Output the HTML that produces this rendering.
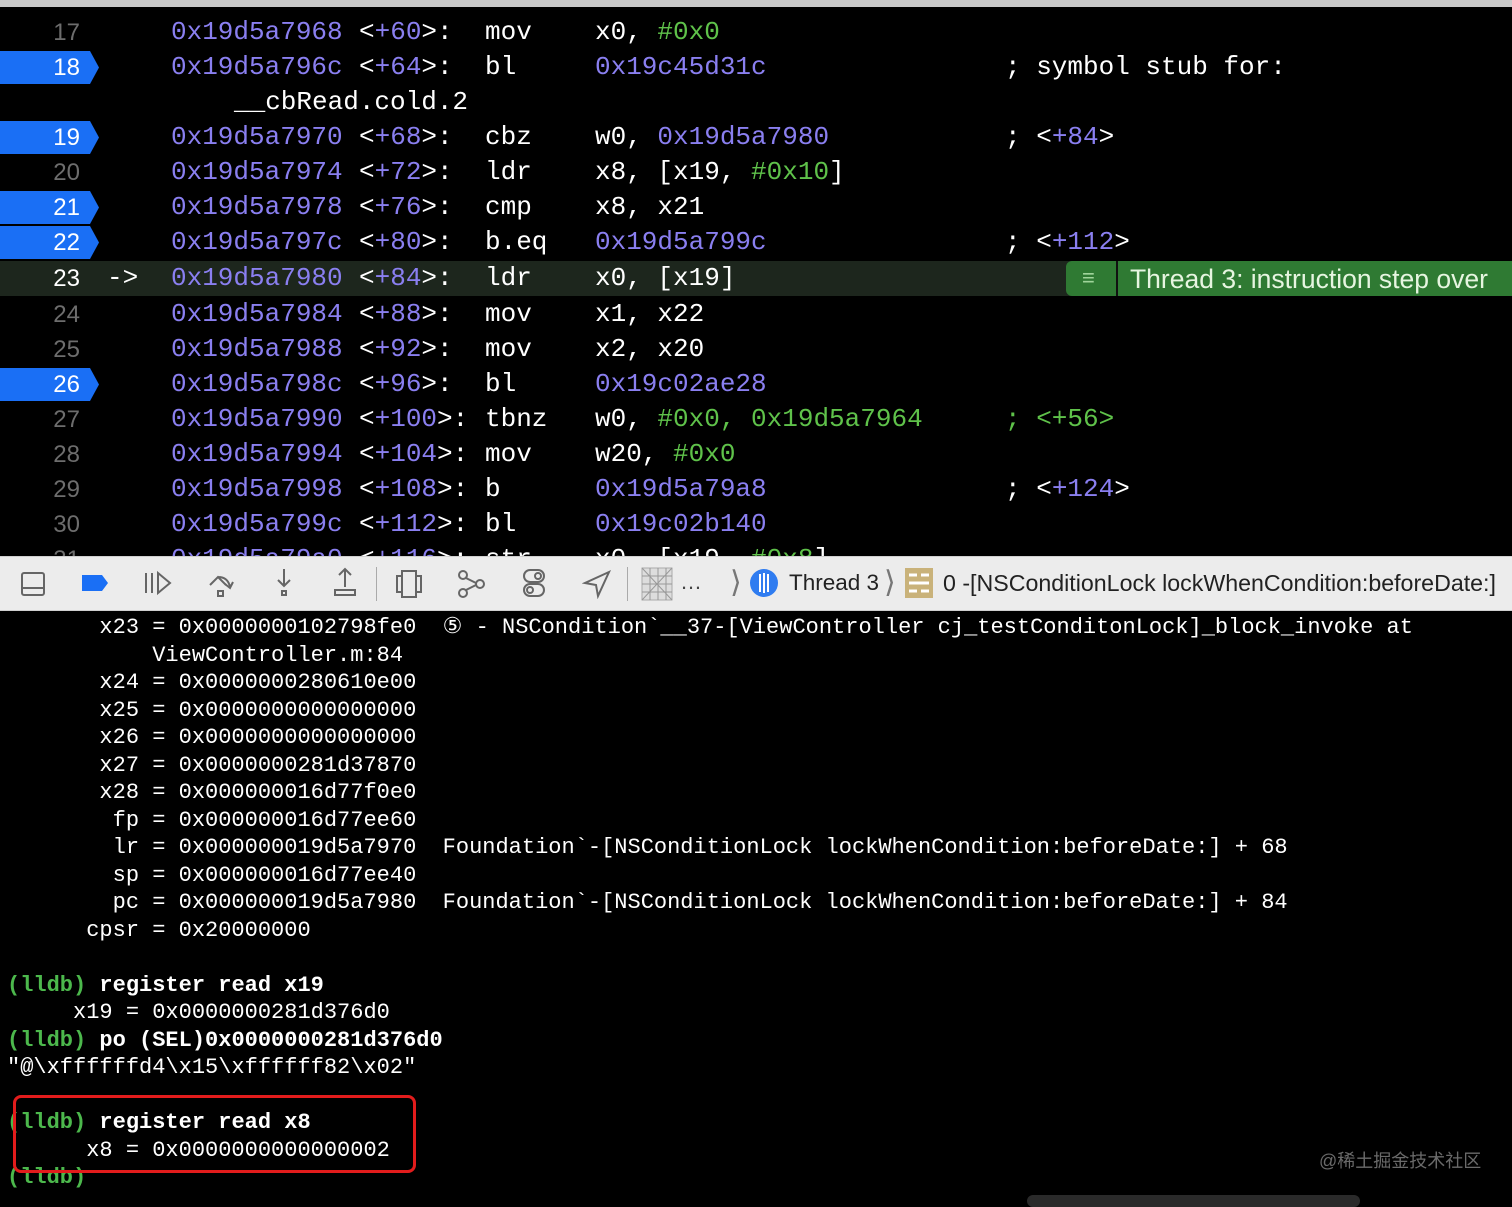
<!DOCTYPE html>
<html><head><meta charset="utf-8"><style>
*{margin:0;padding:0;box-sizing:border-box}
body{width:1512px;height:1201px;background:#000;overflow:hidden;position:relative;font-family:"Liberation Mono",monospace}
.a{position:absolute;white-space:pre}
.r{position:absolute;left:0;width:1512px;height:35px;font-size:26px;line-height:35px;color:#fff}
.r span{position:absolute;top:0;white-space:pre}
.p{color:#8a7ff0}.g{color:#5fc24a}.w{color:#fff}
.ln{left:0;width:80px;text-align:right;color:#6d6d6d;font-family:"Liberation Sans",sans-serif;font-size:24px}
.bp{position:absolute;left:0;top:1px;width:99px;height:33px;background:#1a6ff5;clip-path:polygon(0 0,90px 0,99px 50%,90px 100%,0 100%)}
.bn{color:#fff}
.c{position:absolute;left:7px;font-size:22px;line-height:27.5px;color:#fff;white-space:pre;font-family:"Liberation Mono",monospace}
.lb{color:#4cb84c;font-weight:bold}.b{font-weight:bold}
.tb{position:absolute;top:556px;left:0;width:1512px;height:55px;background:#ececec;border-top:1px solid #cfcfcf;border-bottom:1px solid #cfcfcf;font-family:"Liberation Sans",sans-serif}
.tb svg{position:absolute}
</style></head><body>
<div class="a" style="left:0;top:0;width:1512px;height:7px;background:#c9c9c9"></div>

<div class="r" style="top:15px"><span class="ln">17</span><span class="p" style="left:171px">0x19d5a7968</span><span style="left:359px">&lt;<span class="p" style="position:static">+60</span>&gt;:</span><span style="left:485px">mov</span><span style="left:595px">x0, <span class="g" style="position:static">#0x0</span></span></div>
<div class="r" style="top:50px"><div class="bp"></div><span class="ln bn">18</span><span class="p" style="left:171px">0x19d5a796c</span><span style="left:359px">&lt;<span class="p" style="position:static">+64</span>&gt;:</span><span style="left:485px">bl</span><span class="p" style="left:595px">0x19c45d31c</span><span style="left:1005px">; symbol stub for:</span></div>
<div class="r" style="top:85px"><span style="left:234px">__cbRead.cold.2</span></div>
<div class="r" style="top:120px"><div class="bp"></div><span class="ln bn">19</span><span class="p" style="left:171px">0x19d5a7970</span><span style="left:359px">&lt;<span class="p" style="position:static">+68</span>&gt;:</span><span style="left:485px">cbz</span><span style="left:595px">w0, <span class="p" style="position:static">0x19d5a7980</span></span><span style="left:1005px">; &lt;<span class="p" style="position:static">+84</span>&gt;</span></div>
<div class="r" style="top:155px"><span class="ln">20</span><span class="p" style="left:171px">0x19d5a7974</span><span style="left:359px">&lt;<span class="p" style="position:static">+72</span>&gt;:</span><span style="left:485px">ldr</span><span style="left:595px">x8, [x19, <span class="g" style="position:static">#0x10</span>]</span></div>
<div class="r" style="top:190px"><div class="bp"></div><span class="ln bn">21</span><span class="p" style="left:171px">0x19d5a7978</span><span style="left:359px">&lt;<span class="p" style="position:static">+76</span>&gt;:</span><span style="left:485px">cmp</span><span style="left:595px">x8, x21</span></div>
<div class="r" style="top:225px"><div class="bp"></div><span class="ln bn">22</span><span class="p" style="left:171px">0x19d5a797c</span><span style="left:359px">&lt;<span class="p" style="position:static">+80</span>&gt;:</span><span style="left:485px">b.eq</span><span class="p" style="left:595px">0x19d5a799c</span><span style="left:1005px">; &lt;<span class="p" style="position:static">+112</span>&gt;</span></div>
<div class="r" style="top:261px;background:#1d261d"><span class="ln bn">23</span><span style="left:107px">-&gt;</span><span class="p" style="left:171px">0x19d5a7980</span><span style="left:359px">&lt;<span class="p" style="position:static">+84</span>&gt;:</span><span style="left:485px">ldr</span><span style="left:595px">x0, [x19]</span>
<div style="position:absolute;left:1066px;top:0;width:446px;height:35px;background:#2f7a33;border-radius:6px 0 0 6px"></div>
<div style="position:absolute;left:1116px;top:0;width:2px;height:35px;background:#111"></div>
<span style="left:1082px;top:-1px;color:#9fd49a;font-family:'Liberation Sans',sans-serif;font-size:22px">≡</span>
<span style="left:1130px;top:1px;color:#e6f5e0;font-family:'Liberation Sans',sans-serif;font-size:26.5px">Thread 3: instruction step over</span></div>
<div class="r" style="top:297px"><span class="ln">24</span><span class="p" style="left:171px">0x19d5a7984</span><span style="left:359px">&lt;<span class="p" style="position:static">+88</span>&gt;:</span><span style="left:485px">mov</span><span style="left:595px">x1, x22</span></div>
<div class="r" style="top:332px"><span class="ln">25</span><span class="p" style="left:171px">0x19d5a7988</span><span style="left:359px">&lt;<span class="p" style="position:static">+92</span>&gt;:</span><span style="left:485px">mov</span><span style="left:595px">x2, x20</span></div>
<div class="r" style="top:367px"><div class="bp"></div><span class="ln bn">26</span><span class="p" style="left:171px">0x19d5a798c</span><span style="left:359px">&lt;<span class="p" style="position:static">+96</span>&gt;:</span><span style="left:485px">bl</span><span class="p" style="left:595px">0x19c02ae28</span></div>
<div class="r" style="top:402px"><span class="ln">27</span><span class="p" style="left:171px">0x19d5a7990</span><span style="left:359px">&lt;<span class="p" style="position:static">+100</span>&gt;:</span><span style="left:485px">tbnz</span><span style="left:595px">w0, <span class="g" style="position:static">#0x0, 0x19d5a7964</span></span><span class="g" style="left:1005px">; &lt;+56&gt;</span></div>
<div class="r" style="top:437px"><span class="ln">28</span><span class="p" style="left:171px">0x19d5a7994</span><span style="left:359px">&lt;<span class="p" style="position:static">+104</span>&gt;:</span><span style="left:485px">mov</span><span style="left:595px">w20, <span class="g" style="position:static">#0x0</span></span></div>
<div class="r" style="top:472px"><span class="ln">29</span><span class="p" style="left:171px">0x19d5a7998</span><span style="left:359px">&lt;<span class="p" style="position:static">+108</span>&gt;:</span><span style="left:485px">b</span><span class="p" style="left:595px">0x19d5a79a8</span><span style="left:1005px">; &lt;<span class="p" style="position:static">+124</span>&gt;</span></div>
<div class="r" style="top:507px"><span class="ln">30</span><span class="p" style="left:171px">0x19d5a799c</span><span style="left:359px">&lt;<span class="p" style="position:static">+112</span>&gt;:</span><span style="left:485px">bl</span><span class="p" style="left:595px">0x19c02b140</span></div>
<div class="r" style="top:542px"><span class="ln">31</span><span class="p" style="left:171px">0x19d5a79a0</span><span style="left:359px">&lt;<span class="p" style="position:static">+116</span>&gt;:</span><span style="left:485px">str</span><span style="left:595px">x0, [x19, <span class="g" style="position:static">#0x8</span>]</span></div>

<div class="tb">
<svg style="left:20px;top:14px" width="26" height="26" viewBox="0 0 26 26" fill="none" stroke="#666" stroke-width="2"><rect x="2" y="2" width="22" height="22" rx="2"/><line x1="2" y1="17" x2="24" y2="17"/></svg>
<svg style="left:80px;top:16px" width="30" height="20" viewBox="0 0 30 20"><path d="M2 2h20l6 8-6 8H2z" fill="#1a6ff5"/></svg>
<svg style="left:142px;top:12px" width="32" height="28" viewBox="0 0 32 28" fill="none" stroke="#666" stroke-width="2"><line x1="4" y1="4" x2="4" y2="24"/><line x1="10" y1="4" x2="10" y2="24"/><path d="M16 4l12 10-12 10z"/></svg>
<svg style="left:206px;top:12px" width="32" height="30" viewBox="0 0 32 30" fill="none" stroke="#666" stroke-width="2"><path d="M4 16l8-8 8 8M12 8q10 0 12 10"/><path d="M19 15l5 4 3-6"/><rect x="12" y="22" width="5" height="5"/></svg>
<svg style="left:272px;top:10px" width="24" height="32" viewBox="0 0 24 32" fill="none" stroke="#666" stroke-width="2"><line x1="12" y1="2" x2="12" y2="18"/><path d="M6 13l6 6 6-6"/><rect x="10" y="24" width="4" height="4"/></svg>
<svg style="left:332px;top:8px" width="26" height="34" viewBox="0 0 26 34" fill="none" stroke="#666" stroke-width="2"><line x1="13" y1="4" x2="13" y2="22"/><path d="M7 10l6-6 6 6"/><rect x="3" y="25" width="20" height="5"/></svg>
<div style="position:absolute;left:376px;top:10px;width:1px;height:34px;background:#aaa"></div>
<svg style="left:394px;top:12px" width="30" height="30" viewBox="0 0 30 30" fill="none" stroke="#666" stroke-width="2"><rect x="8" y="2" width="14" height="26"/><rect x="3" y="7" width="5" height="16"/><rect x="22" y="7" width="5" height="16"/></svg>
<svg style="left:456px;top:12px" width="30" height="30" viewBox="0 0 30 30" fill="none" stroke="#666" stroke-width="2"><circle cx="7" cy="6" r="4"/><circle cx="7" cy="24" r="4"/><circle cx="24" cy="15" r="4"/><path d="M10 9l10 5M10 21l10-5"/></svg>
<svg style="left:520px;top:10px" width="28" height="32" viewBox="0 0 28 32" fill="none" stroke="#666" stroke-width="2"><rect x="4" y="3" width="20" height="12" rx="6"/><rect x="4" y="17" width="20" height="12" rx="6"/><circle cx="18" cy="9" r="3"/><circle cx="10" cy="23" r="3"/></svg>
<svg style="left:582px;top:12px" width="30" height="30" viewBox="0 0 30 30" fill="none" stroke="#666" stroke-width="2"><path d="M27 3L3 14l11 2 2 11z"/></svg>
<div style="position:absolute;left:627px;top:10px;width:1px;height:34px;background:#aaa"></div>
<svg style="left:641px;top:10px" width="32" height="34" viewBox="0 0 32 34"><rect x="1" y="1" width="30" height="32" fill="#ddd" stroke="#aaa"/><path d="M1 9h30M1 17h30M1 25h30M9 1v32M17 1v32M25 1v32M1 1l30 32M31 1L1 33" stroke="#999" stroke-width="1"/></svg>
<div class="a" style="left:680px;top:12px;font-size:22px;color:#444;font-family:'Liberation Sans',sans-serif">…</div>
<div class="a" style="left:730px;top:8px;font-size:30px;color:#777;font-family:'Liberation Sans',sans-serif">⟩</div>
<svg style="left:749px;top:11px" width="30" height="30" viewBox="0 0 30 30"><circle cx="15" cy="15" r="14" fill="#2f7cf0"/><path d="M11 6v18M15 5v20M19 6v18" stroke="#fff" stroke-width="2"/></svg>
<div class="a" style="left:789px;top:13px;font-size:22.5px;color:#222;font-family:'Liberation Sans',sans-serif">Thread 3</div>
<div class="a" style="left:884px;top:8px;font-size:30px;color:#777;font-family:'Liberation Sans',sans-serif">⟩</div>
<svg style="left:905px;top:11px" width="28" height="30" viewBox="0 0 28 30"><rect x="0" y="0" width="28" height="30" fill="#c9b27a"/><path d="M4 7h8M16 7h8M4 15h20M4 23h8M16 23h8" stroke="#fff" stroke-width="3"/></svg>
<div class="a" style="left:943px;top:13px;font-size:23.2px;color:#222;font-family:'Liberation Sans',sans-serif">0 -[NSConditionLock lockWhenCondition:beforeDate:]</div>
</div>

<div class="c" style="top:614px">       x23 = 0x0000000102798fe0  ⑤ - NSCondition`__37-[ViewController cj_testConditonLock]_block_invoke at
           ViewController.m:84
       x24 = 0x0000000280610e00
       x25 = 0x0000000000000000
       x26 = 0x0000000000000000
       x27 = 0x0000000281d37870
       x28 = 0x000000016d77f0e0
        fp = 0x000000016d77ee60
        lr = 0x000000019d5a7970  Foundation`-[NSConditionLock lockWhenCondition:beforeDate:] + 68
        sp = 0x000000016d77ee40
        pc = 0x000000019d5a7980  Foundation`-[NSConditionLock lockWhenCondition:beforeDate:] + 84
      cpsr = 0x20000000

<span class="lb">(lldb)</span> <span class="b">register read x19</span>
     x19 = 0x0000000281d376d0
<span class="lb">(lldb)</span> <span class="b">po (SEL)0x0000000281d376d0</span>
"@\xffffffd4\x15\xffffff82\x02"

<span class="lb">(lldb)</span> <span class="b">register read x8</span>
      x8 = 0x0000000000000002
<span class="lb">(lldb)</span></div>
<div class="a" style="left:13px;top:1095px;width:403px;height:78px;border:3px solid #e21c1c;border-radius:8px"></div>
<div class="a" style="left:1319px;top:1147px;font-size:18px;color:#6a6a6a;font-family:'Liberation Sans','Noto Sans CJK SC',sans-serif">@稀土掘金技术社区</div>
<div class="a" style="left:1027px;top:1195px;width:333px;height:12px;background:#2a2a2a;border-radius:8px"></div>
</body></html>
